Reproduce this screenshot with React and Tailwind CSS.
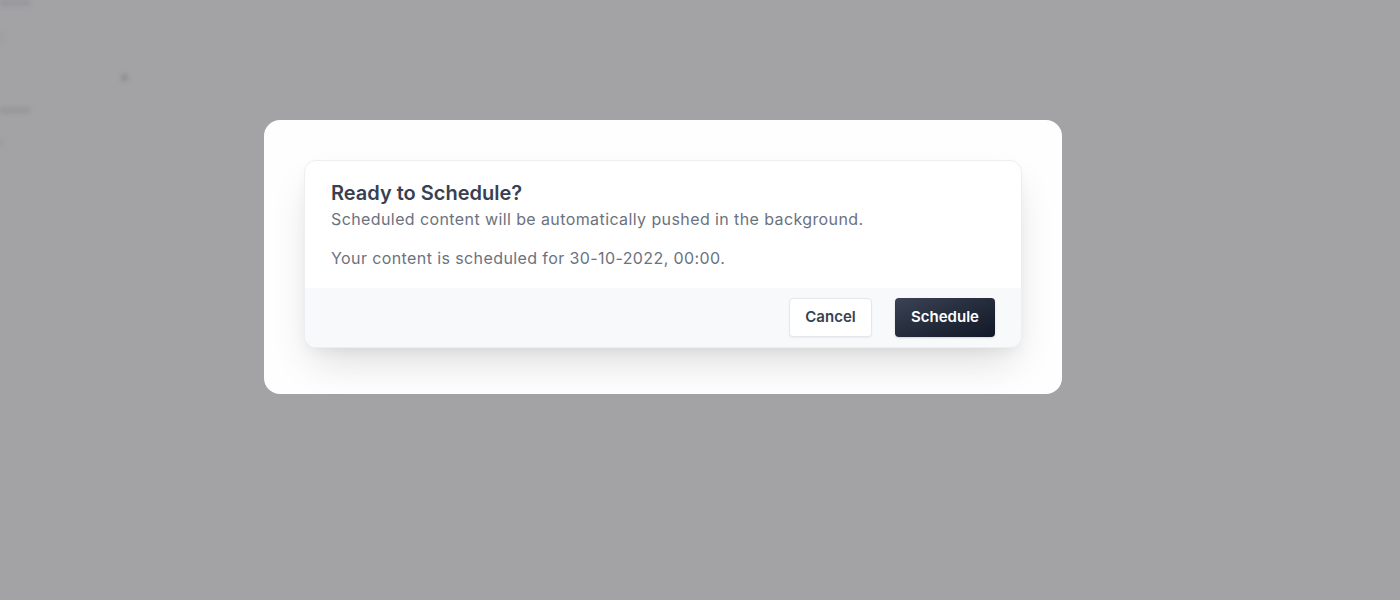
export default function App() {
  return (
    <div
      className="relative h-[600px] w-[1400px] overflow-hidden bg-[#a3a3a5]"
      style={{ fontFamily: "Inter, 'Noto Sans', sans-serif" }}
    >
      <div className="flex flex-col pt-0 blur-[2px]">
        <div className="h-[6px] w-[30px] rounded-b-[2px] bg-[#98989c]" />
        <div className="mt-[26px] h-[10px] w-[3px] bg-[#9c9c9f]" />
        <div className="mt-[32px] flex w-[128px] justify-end">
          <span className="h-[7px] w-[7px] rounded-full bg-[#8e8e92]" />
        </div>
        <div className="mt-[26px] h-[7px] w-[30px] rounded-[2px] bg-[#98989c]" />
        <div className="mt-[24px] h-[10px] w-[3px] bg-[#9c9c9f]" />
      </div>

      <div className="absolute inset-0 pl-[264px] pt-[120px]">
        <div className="w-[798px] rounded-[16px] bg-[#fefefe] px-[40px] pb-[46px] pt-[40px]">
          <div className="overflow-hidden rounded-[12px] border border-[#eceef1] bg-white shadow-[0_20px_40px_-8px_rgba(0,0,0,0.14),0_6px_14px_-4px_rgba(0,0,0,0.06)]">
            <div className="px-[26px] pb-[18px] pt-[18px]">
              <h2 className="text-[20px] font-semibold leading-[28px] text-[#374151]">
                Ready to Schedule?
              </h2>
              <p className="text-[16px] leading-[24px] tracking-[0.4px] text-[#6b7280]">
                Scheduled content will be automatically pushed in the background.
              </p>
              <p className="mt-[15px] text-[16px] leading-[24px] tracking-[0.4px] text-[#6b7280]">
                Your content is scheduled for 30-10-2022, 00:00.
              </p>
            </div>
            <div className="flex items-center justify-end gap-[23px] bg-[#f8f9fb] px-[26px] py-[10px]">
              <button className="h-[39px] w-[83px] rounded-[4px] border border-[#e5e7eb] bg-white text-[15px] font-semibold text-[#374151] shadow-[0_1px_2px_rgba(0,0,0,0.06)]">
                Cancel
              </button>
              <button className="h-[39px] w-[100px] rounded-[4px] bg-gradient-to-br from-[#3b4354] to-[#111827] text-[15px] font-semibold text-white shadow-[0_1px_2px_rgba(0,0,0,0.15)]">
                Schedule
              </button>
            </div>
          </div>
        </div>
      </div>
    </div>
  );
}
